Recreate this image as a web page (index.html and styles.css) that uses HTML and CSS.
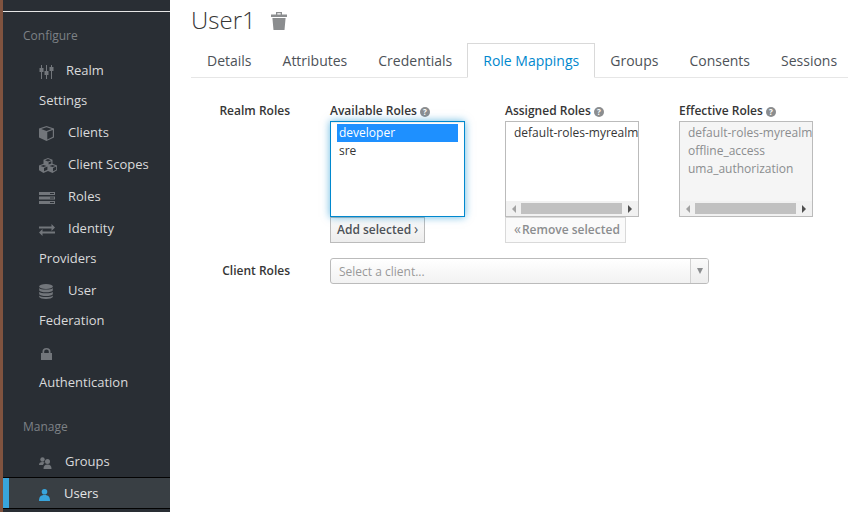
FILE: index.html
```html
<!DOCTYPE html>
<html lang="en">
<head>
<meta charset="utf-8">
<title>User1</title>
<link rel="stylesheet" href="styles.css">
</head>
<body>
<div class="page">
  <aside class="sidebar">
    <div class="topline"></div>
    <h2 class="cat cat-first">Configure</h2>
    <ul class="nav">
      <li><a class="item"><span class="ic w27"><svg width="15" height="14" viewBox="0 0 15 14"><path class="g" d="M2 0h1v3H2zM2 7h1v7H2zM7 0h1v6H7zM7 10h1v4H7zM12 0h1v2h-1zM12 6h1v8h-1z"/><path class="g" d="M.5 3h4v4h-4zM5.500 6h4v4h-4zM10.500 2h4v4h-4z"/></svg></span>Realm Settings</a></li>
      <li><a class="item"><span class="ic w29"><svg width="15" height="15" viewBox="0 0 15 15"><path class="g" d="M7.500 0 15 2.500v9L7.500 15 0 11.500v-9z"/><path class="d" d="M7.500 1.300 12.800 3 7.500 4.900 2.200 3zM8.300 6 13.800 4v6.800l-5.500 2.600z"/></svg></span>Clients</a></li>
      <li><a class="item"><span class="ic w29"><svg width="18" height="15" viewBox="0 0 18 15"><path class="g" d="M9 0l4.500 1.700v4L18 7.400v4.800L13.500 15 9 13.100 4.500 15 0 12.200V7.400l4.500-1.700v-4z"/><path class="d" d="M6 2.300 9 3.400l3-1.100-.5-.2L9 1zM9.600 4.200v2.400l2.700-1V3.200zM1.500 8l3 1.100 3-1.100-3-1zM10.500 8l3 1.100 3-1.100-3-1zM5 9.900v3.300l3.400-1.500V8.600zM14 9.900v3.300l3.200-1.500V8.600z"/></svg></span>Client Scopes</a></li>
      <li><a class="item"><span class="ic w29"><svg width="16" height="12" viewBox="0 0 16 12"><path class="g" d="M0 0h16v3H0zM0 4.500h16v3H0zM0 9h16v3H0z"/><path class="d" d="M11 1h4v1h-4zM11 5.500h4v1h-4zM11 10h4v1h-4z"/></svg></span>Roles</a></li>
      <li><a class="item"><span class="ic w29"><svg width="16" height="12" viewBox="0 0 16 12"><path class="g" d="M0 2.500h12.500V0L16 3.500 12.500 7V4.500H0zM16 7.500H3.500V5L0 8.500 3.500 12V9.500H16z"/></svg></span>Identity Providers</a></li>
      <li><a class="item"><span class="ic w29"><svg width="14" height="15" viewBox="0 0 14 15"><ellipse class="g" cx="7" cy="2.500" rx="6.800" ry="2.500"/><path class="g" d="M.2 4c1 2 12.600 2 13.600 0v2.500c-1 2.400-12.600 2.400-13.600 0zM.2 7.800c1 2 12.600 2 13.600 0v2.500c-1 2.400-12.600 2.400-13.600 0zM.2 11.500c1 2 12.600 2 13.600 0V13c-1 2.600-12.600 2.600-13.600 0z"/></svg></span>User Federation</a></li>
      <li><a class="item"><span class="ic w28 ic-lock"><svg width="11" height="12" viewBox="0 0 11 12"><path class="g" d="M0 5h1.500V3.500a4 3.500 0 0 1 8 0V5H11v7H0zM3.200 5h4.600V3.500a2.300 2 0 0 0-4.600 0z" fill-rule="evenodd"/></svg></span>Authentication</a></li>
    </ul>
    <h2 class="cat cat-next">Manage</h2>
    <ul class="nav">
      <li><a class="item"><span class="ic w26"><svg width="13" height="12" viewBox="0 0 13 12"><circle class="g" cx="3.500" cy="2.500" r="2.200"/><path class="g" d="M0 8c0-2 1-3 3.500-3 1 0 1.700.2 2.200.6C4.700 6.300 4.200 7.100 4 8z"/><circle class="g" cx="8.500" cy="4.500" r="2.500"/><path class="g" d="M4.500 12c0-3 1-4.500 4-4.500s4 1.500 4 4.500z"/></svg></span>Groups</a></li>
      <li class="active"><a class="item item-active"><span class="ic w25"><svg width="11" height="12" viewBox="0 0 11 12"><circle class="b" cx="5.500" cy="2.800" r="2.800"/><path class="b" d="M0 12c0-4 1.500-6 5.500-6s5.500 2 5.500 6z"/></svg></span>Users</a></li>
    </ul>
  </aside>

  <main class="main">
    <h1 class="title">User1<svg class="trash" width="16" height="18" viewBox="0 0 16 18"><path fill="#8b8d8f" d="M5 0h6v2.500h5V5H0V2.500h5zM6.300 1.200v1.300h3.400V1.200zM1.400 6h13.200l-1.100 12h-11z"/></svg></h1>
    <ul class="tabs">
      <li class="tab">Details</li>
      <li class="tab">Attributes</li>
      <li class="tab">Credentials</li>
      <li class="tab tab-active">Role Mappings</li>
      <li class="tab">Groups</li>
      <li class="tab">Consents</li>
      <li class="tab">Sessions</li>
    </ul>

    <div class="form">
      <div class="row row-realm">
        <div class="label">Realm Roles</div>
        <div class="col">
          <div class="col-title">Available Roles<span class="help">?</span></div>
          <div class="list list-focus">
            <div class="opt opt-sel">developer</div>
            <div class="opt">sre</div>
          </div>
          <div class="btn">Add selected<span class="chev">›</span></div>
        </div>
        <div class="col col-b">
          <div class="col-title">Assigned Roles<span class="help">?</span></div>
          <div class="list list-scroll">
            <div class="opts"><div class="opt">default-roles-myrealm</div></div>
            <div class="sbar"><span class="arr arr-l"></span><span class="thumb"></span><span class="arr arr-r"></span></div>
          </div>
          <div class="btn btn-off"><span class="chev">«</span>Remove selected</div>
        </div>
        <div class="col col-c">
          <div class="col-title">Effective Roles<span class="help">?</span></div>
          <div class="list list-scroll list-off">
            <div class="opts"><div class="opt">default-roles-myrealm</div><div class="opt">offline_access</div><div class="opt">uma_authorization</div></div>
            <div class="sbar"><span class="arr arr-l"></span><span class="thumb"></span><span class="arr arr-r"></span></div>
          </div>
        </div>
      </div>
      <div class="row row-client">
        <div class="label">Client Roles</div>
        <div class="combo">
          <span class="combo-text">Select a client...</span>
          <span class="combo-btn"><span class="caret"></span></span>
        </div>
      </div>
    </div>
  </main>
</div>
</body>
</html>
```
FILE: styles.css
```css
* { box-sizing: border-box; }
html, body { margin: 0; padding: 0; height: 100%; }
body {
  font-family: "Open Sans", "Liberation Sans", sans-serif;
  font-size: 12px;
  color: #363636;
  background: #fff;
  overflow: hidden;
}
.page { display: flex; height: 512px; overflow: hidden; }

/* sidebar */
.sidebar {
  flex: 0 0 170px;
  height: 512px;
  background: #292e34;
  border-left: 3px solid #80533f;
  padding-top: 11px;
  overflow: hidden;
}
.topline { height: 1px; background: #e6e6e6; }
.cat {
  margin: 0;
  padding-left: 20px;
  font-size: 12px;
  line-height: 18px;
  font-weight: 400;
  color: #7d8186;
}
.cat-first { margin-top: 15px; }
.cat-next { margin-top: 20px; }
.nav { list-style: none; margin: 0; padding: 0; }
.cat-first + .nav { margin-top: 9px; }
.cat-next + .nav { margin-top: 9px; }
.nav li { padding: 1px 0; }
.item {
  display: block;
  padding: 0 18px 0 36px;
  font-size: 13px;
  line-height: 30px;
  color: #d9dadb;
}
.nav .active {
  background: #393f44;
  border-top: 1px solid #030303;
  border-bottom: 1px solid #030303;
  box-shadow: inset 6px 0 0 #39a5dc;
  padding: 0;
}
.item-active { color: #e4e5e6; }
.ic { display: inline-block; vertical-align: middle; line-height: 0; }
.ic svg { display: block; }
.ic-lock svg { margin-left: 2px; }
.w25 { width: 25px; }
.w26 { width: 26px; }
.w27 { width: 27px; }
.w28 { width: 28px; }
.w29 { width: 29px; }
.g { fill: #72767b; }
.d { fill: #292e34; }
.b { fill: #39a5dc; }

/* main */
.main { flex: 1; min-width: 0; padding: 0 0 0 21px; }
.title {
  margin: 0;
  height: 43px;
  padding-top: 6px;
  font-size: 24px;
  line-height: 28px;
  font-weight: 300;
  color: #363636;
  white-space: nowrap;
}
.trash { margin-left: 15px; vertical-align: -1px; }
.tabs {
  display: flex;
  list-style: none;
  margin: 0;
  padding: 0;
  height: 35px;
  border-bottom: 1px solid #e6e6e6;
  white-space: nowrap;
}
.tab {
  padding: 0 15px;
  margin-right: -1px;
  border: 1px solid transparent;
  font-size: 14px;
  line-height: 33px;
  color: #4d5258;
  height: 35px;
}
.tab-active {
  color: #0088ce;
  background: #fff;
  border-color: #d9d9d9 #d9d9d9 #fff;
}

/* form */
.form { padding-top: 24px; }
.row { display: flex; }
.label {
  flex: 0 0 99px;
  margin-right: 40px;
  text-align: right;
  font-weight: 600;
  line-height: 18px;
  color: #363636;
}
.col { flex: 0 0 175px; width: 175px; }
.col-b { flex-basis: 174px; width: 174px; }
.col-c { flex: 0 0 134px; width: 134px; }
.col-title { font-weight: 600; line-height: 18px; height: 18px; margin-bottom: 1px; white-space: nowrap; color: #363636; }
.help {
  display: inline-block;
  width: 10px;
  height: 10px;
  margin-left: 3px;
  border-radius: 50%;
  background: #8b8d8f;
  color: #fff;
  font-size: 8px;
  font-weight: 700;
  line-height: 10px;
  text-align: center;
  vertical-align: 0;
}
.list {
  width: 135px;
  height: 96px;
  background: #fff;
  border: 1px solid #bbb;
  padding: 2px 6px;
  overflow: hidden;
  position: relative;
}
.list-focus {
  border-color: #0088ce;
  box-shadow: inset 0 1px 1px rgba(3,3,3,.075), 0 0 8px rgba(0,136,206,.6);
  padding: 2px 6px;
}
.col-b .list, .col-c .list { width: 134px; }
.list-scroll { display: flex; flex-direction: column; padding: 0; }
.opts { flex: 1; padding: 2px 0 0 8px; overflow: hidden; }
.opt { height: 18px; line-height: 18px; padding: 0 2px; white-space: nowrap; color: #363636; }
.opts .opt { padding: 0; }
.opt-sel { background: #1e90ff; color: #fff; }
.list-off { background: #f5f5f5; }
.list-off .opt { color: #8b8d8f; }
.sbar {
  flex: 0 0 15px;
  display: flex;
  align-items: center;
  background: #f1f1f1;
}
.thumb { width: 101px; height: 11px; background: #c1c1c1; }
.arr { display: flex; justify-content: center; }
.arr-l { flex: 0 0 15px; }
.arr-r { flex: 1; }
.arr-l::before { content: ""; border: 4px solid transparent; border-left-width: 0; border-right: 4px solid #a3a3a3; }
.arr-r::before { content: ""; border: 4px solid transparent; border-right-width: 0; border-left: 4px solid #505050; }
.btn {
  display: inline-block;
  height: 26px;
  padding: 0 5px 0 6px;
  background: linear-gradient(#fafafa, #ededed);
  border: 1px solid #bbb;
  font-weight: 600;
  line-height: 22px;
  color: #4d5258;
  white-space: nowrap;
}
.btn-off { padding: 0 5px; background: #fafafa; border-color: #d9d9d9; color: #8b8d8f; }
.chev { font-weight: 400; font-size: 14px; }
.btn .chev:last-child { margin-left: 3px; }
.btn .chev:first-child { margin-right: 1px; }
.row-client { margin-top: 15px; align-items: center; }
.combo {
  flex: 0 0 379px;
  height: 26px;
  display: flex;
  border: 1px solid #bbb;
  border-radius: 3px;
  background: linear-gradient(#fff, #f2f2f2);
  overflow: hidden;
}
.combo-text { flex: 1; padding-left: 8px; line-height: 25px; color: #999; }
.combo-btn {
  flex: 0 0 18px;
  border-left: 1px solid #d1d1d1;
  background: linear-gradient(#fafafa, #ededed);
  display: flex;
  align-items: center;
  justify-content: center;
}
.caret { border: 3.500px solid transparent; border-bottom-width: 0; border-top: 6px solid #8b8d8f; }
```
